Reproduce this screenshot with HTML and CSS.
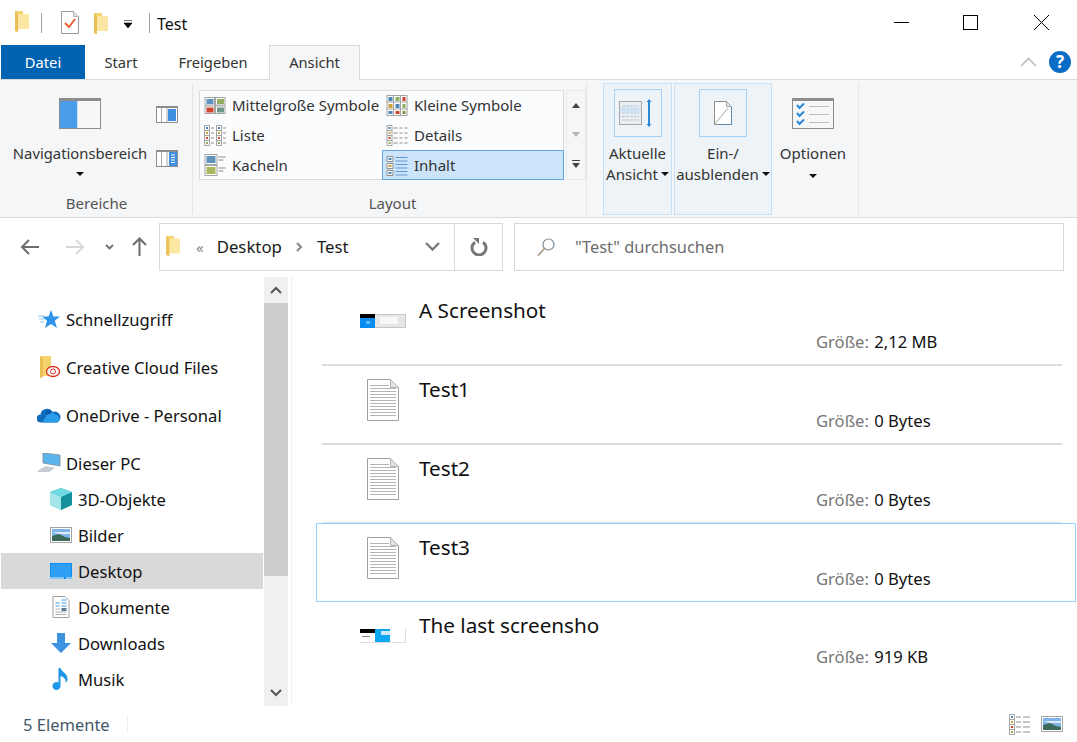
FILE: index.html
```html
<!doctype html>
<html>
<head>
    <title>Test</title>
    <meta charset="utf-8"/>
    <link rel="stylesheet" href="styles.css">
</head>
<body>
<svg class="defs" width="0" height="0">
    <defs>
        <symbol id="folder" viewBox="0 0 14 22">
            <path d="M0 1h8v3h6v15H3v3l-3-1z" fill="#f6d36f"/>
            <path d="M3 4h11v15H3z" fill="#fbe6a2"/>
            <path d="M0 1l3 3v18l-3-1z" fill="#e9bf56"/>
        </symbol>
        <symbol id="doc" viewBox="0 0 32 42">
            <path d="M.5.5h23l8 8v33H.5z" fill="#fff" stroke="#a0a0a0"/>
            <path d="M23.5.5v8h8z" fill="#e2e2e2" stroke="#b5b5b5"/>
            <path d="M3 6.500h19M3 9.500h26M3 12.500h26M3 15.500h26M3 18.500h26M3 21.500h26M3 24.500h26M3 27.500h26M3 30.500h26M3 33.500h26M3 36.500h26" stroke="#b4b4b4"/>
        </symbol>
        <symbol id="pic" viewBox="0 0 22 16">
            <rect x=".5" y=".5" width="21" height="15" fill="#fff" stroke="#a4a4a4"/>
            <rect x="2" y="2" width="18" height="12" fill="#7fb4ea"/>
            <path d="M2 9l7-2 6 3 5 1v3H2z" fill="#3e6a5c"/>
            <path d="M2 5h18v2H9z" fill="#dcebf7"/>
        </symbol>
    </defs>
</svg>

<header class="titlebar">
    <div class="qat">
        <svg class="qat-folder" width="14" height="22"><use href="#folder"/></svg>
        <span class="qat-sep"></span>
        <svg class="qat-check" width="18" height="23" viewBox="0 0 18 23">
            <path d="M.5.500h12l5 5v17H.5z" fill="#fff" stroke="#9a9a9a"/>
            <path d="M12.500.500v5h5" fill="#e6e6e6" stroke="#b5b5b5"/>
            <path d="M4 12l4 4 6-8" fill="none" stroke="#e8622c" stroke-width="2"/>
        </svg>
        <svg class="qat-folder2" width="14" height="22"><use href="#folder"/></svg>
        <svg class="qat-drop" width="10" height="9" viewBox="0 0 10 9"><path d="M1 .5h8M1 3h8L5 8z" fill="#000" stroke="#000" stroke-width=".6"/></svg>
        <span class="qat-sep second"></span>
        <span class="win-title">Test</span>
    </div>
    <div class="winctl">
        <svg width="15" height="15" viewBox="0 0 15 15"><path d="M0 7.500h15" stroke="#000"/></svg>
        <svg width="15" height="15" viewBox="0 0 15 15"><rect x=".5" y=".5" width="14" height="14" fill="none" stroke="#000"/></svg>
        <svg class="win-close" width="15" height="15" viewBox="0 0 15 15"><path d="M0 0l15 15M15 0L0 15" stroke="#000"/></svg>
    </div>
</header>

<nav class="tabs">
    <a class="tab file">Datei</a>
    <a class="tab start">Start</a>
    <a class="tab share">Freigeben</a>
    <a class="tab active">Ansicht</a>
    <span class="tabs-fill"></span>
    <svg class="collapse" width="17" height="10" viewBox="0 0 17 10"><path d="M1 9l7.500-7.500L16 9" fill="none" stroke="#bcbcbc" stroke-width="1.600"/></svg>
    <span class="help">?</span>
</nav>

<section class="ribbon">
    <div class="group panes">
        <div class="group-body">
            <div class="pane-big">
                <svg width="42" height="31" viewBox="0 0 42 31">
                    <rect x=".5" y=".5" width="41" height="30" fill="#f7f7f7" stroke="#8d8d8d"/>
                    <rect x="0" y="0" width="42" height="3" fill="#8d8d8d"/>
                    <rect x="1" y="3" width="17" height="27" fill="#4a9de6"/>
                    <path d="M18.500 3v27" stroke="#cfe3f5"/>
                </svg>
                <span class="big-label">Navigationsbereich</span>
                <span class="caret"></span>
            </div>
            <div class="pane-side">
                <svg width="22" height="17" viewBox="0 0 22 17">
                    <rect x=".5" y=".5" width="21" height="16" fill="#fff" stroke="#8d8d8d"/>
                    <rect y="0" width="22" height="2" fill="#8d8d8d"/>
                    <rect x="12" y="3" width="8" height="12" fill="#3e8fe0"/>
                    <path d="M5.500 2v14M11 2v14" stroke="#a9a9a9"/>
                </svg>
                <svg width="22" height="17" viewBox="0 0 22 17">
                    <rect x=".5" y=".5" width="21" height="16" fill="#fff" stroke="#8d8d8d"/>
                    <rect y="0" width="22" height="2" fill="#8d8d8d"/>
                    <rect x="13" y="2" width="8" height="14" fill="#3e8fe0"/>
                    <path d="M5.500 2v14M11 2v14" stroke="#a9a9a9"/>
                    <path d="M15 5h4M15 7.500h4M15 10h4M15 12.500h4" stroke="#fff"/>
                </svg>
            </div>
        </div>
        <div class="group-label">Bereiche</div>
    </div>

    <div class="group layout">
        <div class="group-body">
            <div class="gallery">
                <div class="gal-item">
                    <svg width="21" height="17" viewBox="0 0 21 17">
                        <rect x=".5" y=".5" width="9.500" height="7.500" fill="#fff" stroke="#a4a4a4"/>
                        <rect x="11" y=".5" width="9.500" height="7.500" fill="#fff" stroke="#a4a4a4"/>
                        <rect x=".5" y="9" width="9.500" height="7.500" fill="#fff" stroke="#a4a4a4"/>
                        <rect x="11" y="9" width="9.500" height="7.500" fill="#fff" stroke="#a4a4a4"/>
                        <rect x="2" y="2" width="7" height="5" fill="#5f93bd"/>
                        <rect x="12.500" y="2" width="7" height="5" fill="#8cae5e"/>
                        <rect x="2" y="10.500" width="7" height="5" fill="#d2452c"/>
                        <rect x="12.500" y="10.500" width="7" height="5" fill="#6f9a8a"/>
                    </svg>
                    <span>Mittelgroße Symbole</span>
                </div>
                <div class="gal-item">
                    <svg width="21" height="21" viewBox="0 0 21 21">
                        <rect x=".5" y=".5" width="20" height="20" fill="#fff" stroke="#a4a4a4"/>
                        <path d="M7 0v21M14 0v21M0 7h21M0 14h21" stroke="#a4a4a4"/>
                        <rect x="2" y="2" width="4" height="4" fill="#4d89b8"/><rect x="9" y="2" width="4" height="4" fill="#8cae5e"/><rect x="16" y="2" width="3" height="4" fill="#d2452c"/>
                        <rect x="2" y="9" width="4" height="4" fill="#c9a336"/><rect x="9" y="9" width="4" height="4" fill="#4d89b8"/><rect x="16" y="9" width="3" height="4" fill="#8cae5e"/>
                        <rect x="2" y="16" width="4" height="3" fill="#4d89b8"/><rect x="9" y="16" width="4" height="3" fill="#d2452c"/><rect x="16" y="16" width="3" height="3" fill="#7b8f45"/>
                    </svg>
                    <span>Kleine Symbole</span>
                </div>
                <div class="gal-item">
                    <svg width="22" height="21" viewBox="0 0 22 21">
                        <path d="M.5.500h5v20h-5zM.5 5.500h5M.5 10.500h5M.5 15.500h5M12.500.500h5v20h-5zM12.500 5.500h5M12.500 10.500h5M12.500 15.500h5" fill="#fff" stroke="#a4a4a4"/>
                        <path d="M7 3h3M7 8h3M7 13h3M7 18h3M19 3h3M19 8h3M19 13h3M19 18h3" stroke="#8d8d8d"/>
                        <rect x="2" y="2" width="2" height="2" fill="#4d89b8"/><rect x="2" y="7" width="2" height="2" fill="#c9a336"/><rect x="2" y="12" width="2" height="2" fill="#d2452c"/><rect x="2" y="17" width="2" height="2" fill="#8cae5e"/>
                        <rect x="14" y="2" width="2" height="2" fill="#4d89b8"/><rect x="14" y="7" width="2" height="2" fill="#c9a336"/><rect x="14" y="12" width="2" height="2" fill="#d2452c"/><rect x="14" y="17" width="2" height="2" fill="#8cae5e"/>
                    </svg>
                    <span>Liste</span>
                </div>
                <div class="gal-item">
                    <svg width="21" height="21" viewBox="0 0 21 21">
                        <path d="M.5.500h5v20h-5zM.5 5.500h5M.5 10.500h5M.5 15.500h5" fill="#fff" stroke="#a4a4a4"/>
                        <path d="M7 3h4M13 3h3M18 3h3M7 8h4M13 8h3M18 8h3M7 13h4M13 13h3M18 13h3M7 18h4M13 18h3M18 18h3" stroke="#8d8d8d"/>
                        <rect x="2" y="2" width="2" height="2" fill="#4d89b8"/><rect x="2" y="7" width="2" height="2" fill="#c9a336"/><rect x="2" y="12" width="2" height="2" fill="#d2452c"/><rect x="2" y="17" width="2" height="2" fill="#8cae5e"/>
                    </svg>
                    <span>Details</span>
                </div>
                <div class="gal-item">
                    <svg width="21" height="22" viewBox="0 0 21 22">
                        <rect x=".5" y=".5" width="12" height="10" fill="#fff" stroke="#a4a4a4"/>
                        <rect x=".5" y="11.500" width="12" height="10" fill="#fff" stroke="#a4a4a4"/>
                        <rect x="2" y="2" width="9" height="7" fill="#5f93bd"/>
                        <rect x="2" y="13" width="9" height="7" fill="#a9b85c"/>
                        <path d="M14 3h7M14 6h5M14 14h7M14 17h5" stroke="#8d8d8d"/>
                    </svg>
                    <span>Kacheln</span>
                </div>
                <div class="gal-item selected">
                    <svg width="21" height="21" viewBox="0 0 21 21">
                        <path d="M.5 1.500h6v5h-6zM.5 8.500h6v5h-6zM.5 15.500h6v5h-6z" fill="#fff" stroke="#8d8d8d"/>
                        <rect x="2" y="3" width="3" height="2" fill="#4d89b8"/><rect x="2" y="10" width="3" height="2" fill="#c9a336"/><rect x="2" y="17" width="3" height="2" fill="#4d89b8"/>
                        <path d="M9 2.500h12M9 6h12M9 9.500h12M9 13h12M9 16.500h12M9 20h12" stroke="#5c9bd8"/>
                    </svg>
                    <span>Inhalt</span>
                </div>
            </div>
            <div class="gal-scroll">
                <span class="gal-btn"><i class="tri up"></i></span>
                <span class="gal-btn"><i class="tri down off"></i></span>
                <span class="gal-btn more"><i class="bar"></i><i class="tri down"></i></span>
            </div>
        </div>
        <div class="group-label">Layout</div>
    </div>

    <div class="group views">
        <div class="view-btn hot view-current">
            <span class="view-icon">
                <svg width="38" height="28" viewBox="0 0 38 28">
                    <rect x=".5" y="2.500" width="22" height="23" fill="#e9eef2" stroke="#a8a8a8"/>
                    <path d="M3 7h17M3 10.500h17M3 14h17M3 17.500h17M3 21h17" stroke="#b9c6d0" stroke-dasharray="3 1"/>
                    <rect x="1" y="8" width="21" height="6" fill="#c9e1f5" opacity=".7"/>
                    <path d="M30 2v24" stroke="#2b88d8" stroke-width="2"/>
                    <path d="M27.500 3h5L30 0zM27.500 25h5L30 28z" fill="#2b88d8"/>
                </svg>
            </span>
            <span class="view-text">Aktuelle<br>Ansicht<i class="caret inline"></i></span>
        </div>
        <div class="view-btn hot view-toggle">
            <span class="view-icon">
                <svg width="18" height="24" viewBox="0 0 18 24">
                    <path d="M.5.500h12l5 5v18H.5z" fill="#fff" stroke="none"/>
                    <path d="M17.500 6v17.500H.5V.5h12" fill="none" stroke="#8d8d8d"/>
                    <path d="M17.500 6v17.500H5" fill="none" stroke="#2b88d8" stroke-dasharray="2 2"/>
                    <path d="M12.500.500v5h5z" fill="#e2e2e2" stroke="#a8a8a8"/>
                    <path d="M1 23L14 7" stroke="#a8a8a8"/>
                </svg>
            </span>
            <span class="view-text">Ein-/<br>ausblenden<i class="caret inline"></i></span>
        </div>
        <div class="view-btn view-options">
            <span class="view-icon plain">
                <svg width="42" height="31" viewBox="0 0 42 31">
                    <rect x=".5" y=".5" width="41" height="30" fill="#f7f7f7" stroke="#8d8d8d"/>
                    <rect width="42" height="3" fill="#8d8d8d"/>
                    <path d="M5 7l2.500 3L12 5.500M5 15l2.500 3L12 13.500M5 23l2.500 3L12 21.500" fill="none" stroke="#2b88d8" stroke-width="2"/>
                    <path d="M17 8.500h20M17 16.500h20M17 24.500h20" stroke="#bcbcbc"/>
                </svg>
            </span>
            <span class="view-text">Optionen<br><i class="caret solo"></i></span>
        </div>
    </div>
</section>

<section class="navbar">
    <svg class="nav-back" width="19" height="16" viewBox="0 0 19 16"><path d="M19 8H2M9 1L2 8l7 7" fill="none" stroke="#6d6d6d" stroke-width="2"/></svg>
    <svg class="nav-fwd" width="19" height="16" viewBox="0 0 19 16"><path d="M0 8h17M10 1l7 7-7 7" fill="none" stroke="#d9d9d9" stroke-width="2"/></svg>
    <svg class="nav-drop" width="9" height="6" viewBox="0 0 9 6"><path d="M1 1l3.500 3.500L8 1" fill="none" stroke="#6d6d6d" stroke-width="1.800"/></svg>
    <svg class="nav-up" width="15" height="19" viewBox="0 0 15 19"><path d="M7.500 19V2M1 8l6.500-6.500L14 8" fill="none" stroke="#6d6d6d" stroke-width="2"/></svg>
    <div class="address">
        <svg class="addr-folder" width="14" height="21"><use href="#folder"/></svg>
        <span class="crumb-more">«</span>
        <span class="crumb">Desktop</span>
        <svg class="crumb-sep" width="7" height="10" viewBox="0 0 7 10"><path d="M1 1l4 4-4 4" fill="none" stroke="#8a8a8a" stroke-width="2.200"/></svg>
        <span class="crumb">Test</span>
        <span class="addr-fill"></span>
        <svg class="addr-drop" width="15" height="9" viewBox="0 0 15 9"><path d="M1 1l6.500 6.500L14 1" fill="none" stroke="#7a7a7a" stroke-width="2.400"/></svg>
        <span class="refresh">
            <svg width="18" height="18" viewBox="0 0 18 18"><path d="M5 4.200A7 7 0 1 0 13 4.200" fill="none" stroke="#777" stroke-width="3"/><path d="M3 0h6v6z" fill="#777"/></svg>
        </span>
    </div>
    <div class="search">
        <svg width="20" height="20" viewBox="0 0 20 20"><circle cx="12.500" cy="7.500" r="5.500" fill="none" stroke="#7d8a96" stroke-width="1.200"/><path d="M8.500 11.500L2 18.500" stroke="#a08a70" stroke-width="1.400"/></svg>
        <span>"Test" durchsuchen</span>
    </div>
</section>

<main class="main">
    <aside class="tree">
        <ul class="tree-list">
            <li class="node top">
                <svg width="22" height="20" viewBox="0 0 22 20"><path d="M13 1l2.500 6.500H22l-5.200 4.200L19 19l-6-4-6 4 2-7.300L4 7.500h6.500z" fill="#2f93e8"/><path d="M0 7h6M1 10h5M2 13h4" stroke="#8cc4f2"/></svg>
                <span>Schnellzugriff</span>
            </li>
            <li class="node top">
                <svg width="22" height="22" viewBox="0 0 22 22"><path d="M2 0h11v20H5l-3 1z" fill="#f6d36f"/><path d="M2 0l3 3v18l-3 1z" fill="#e9bf56"/><ellipse cx="15" cy="15.500" rx="6.500" ry="5" fill="#fff" stroke="#e0301e" stroke-width="1.300"/><circle cx="15" cy="15.500" r="2.500" fill="none" stroke="#e0301e"/></svg>
                <span>Creative Cloud Files</span>
            </li>
            <li class="node top">
                <svg class="wide" width="24" height="16" viewBox="0 0 24 16"><path d="M4 15.500a4 4 0 0 1-.5-8A6.500 6.500 0 0 1 15.500 5 5 5 0 0 1 20 15.500z" fill="#0f6cbd"/><path d="M9 9.500a5 5 0 0 1 9-2 4.200 4.200 0 0 1 2 8H5z" fill="#2a9cea"/><path d="M9 4a6 6 0 0 1 6.500 1L11 8l-3-1z" fill="#0a5aa8"/></svg>
                <span>OneDrive - Personal</span>
            </li>
            <li class="node top">
                <svg class="wide" width="24" height="20" viewBox="0 0 24 20"><path d="M6 0l17 2v11L6 10z" fill="#5db5ee" stroke="#7b8a96" stroke-width=".8"/><path d="M0 18l9-5 9 2-6 4H2z" fill="#c6ccd1"/></svg>
                <span>Dieser PC</span>
            </li>
            <li class="node sub">
                <svg width="22" height="22" viewBox="0 0 22 22"><path d="M11 0l11 4v13l-11 5-11-5V4z" fill="#4ec4cf"/><path d="M0 4l11 5v13L0 17z" fill="#a5e6ea"/><path d="M22 4L11 9v13l11-5z" fill="#16909c"/><path d="M0 4l11-4 11 4-11 5z" fill="#6fd8e0"/></svg>
                <span>3D-Objekte</span>
            </li>
            <li class="node sub">
                <svg width="22" height="16"><use href="#pic"/></svg>
                <span>Bilder</span>
            </li>
            <li class="node sub node-current">
                <svg width="22" height="16" viewBox="0 0 22 16"><rect width="22" height="16" fill="#0d8ef2"/><path d="M1 1h20v13H1z" fill="#2e9ff5"/><path d="M0 15h22" stroke="#fff" stroke-dasharray="14 2"/></svg>
                <span>Desktop</span>
            </li>
            <li class="node sub">
                <svg width="17" height="22" viewBox="0 0 17 22"><path d="M.5.500h12l4 4v17H.5z" fill="#fff" stroke="#a0a0a0"/><path d="M3 7h4M3 10h4M9 4h5M9 7h5M9 10h5" stroke="#3d9be6"/><rect x="9" y="12" width="5" height="3" fill="#5d7d8f"/><path d="M3 13h5M3 16h11M3 18.500h11" stroke="#b0b0b0"/></svg>
                <span>Dokumente</span>
            </li>
            <li class="node sub">
                <svg width="20" height="20" viewBox="0 0 20 20"><path d="M6 0h8v10h6L10 20 0 10h6z" fill="#3d93e2"/></svg>
                <span>Downloads</span>
            </li>
            <li class="node sub">
                <svg width="17" height="22" viewBox="0 0 17 22"><path d="M6 0h2c1 4 7 5 7 11 0 2-1 3-2 4 1-4-2-6-5-7v10a4 4 0 1 1-2-3.500z" fill="#1e97e8"/></svg>
                <span>Musik</span>
            </li>
            <li class="node sub">
                <svg width="22" height="16" viewBox="0 0 22 16"><rect x=".5" y=".5" width="21" height="15" fill="#3f6fb5" stroke="#8d8d8d"/></svg>
                <span></span>
            </li>
        </ul>
    </aside>
    <div class="vscroll">
        <span class="vs-btn"><svg width="12" height="8" viewBox="0 0 12 8"><path d="M1 7l5-5 5 5" fill="none" stroke="#555" stroke-width="2"/></svg></span>
        <span class="vs-thumb"></span>
        <span class="vs-track"></span>
        <span class="vs-btn"><svg width="12" height="8" viewBox="0 0 12 8"><path d="M1 1l5 5 5-5" fill="none" stroke="#555" stroke-width="2"/></svg></span>
    </div>
    <div class="files">
        <article class="file-row">
            <div class="file-icon">
                <svg width="46" height="14" viewBox="0 0 46 14"><rect width="46" height="14" fill="#c8c8c8"/><rect width="15" height="14" fill="#0a8df0"/><rect width="15" height="4" fill="#000"/><rect x="15" y="1" width="30" height="12" fill="#e6e6e6"/><rect x="20" y="3" width="18" height="7" fill="#f8f8f8"/><rect x="6" y="7" width="4" height="3" fill="#5fc0ff"/></svg>
            </div>
            <div class="file-name">A Screenshot</div>
            <div class="file-size"><span>Größe:</span> 2,12 MB</div>
        </article>
        <article class="file-row">
            <div class="file-icon"><svg width="32" height="42"><use href="#doc"/></svg></div>
            <div class="file-name">Test1</div>
            <div class="file-size"><span>Größe:</span> 0 Bytes</div>
        </article>
        <article class="file-row">
            <div class="file-icon"><svg width="32" height="42"><use href="#doc"/></svg></div>
            <div class="file-name">Test2</div>
            <div class="file-size"><span>Größe:</span> 0 Bytes</div>
        </article>
        <article class="file-row focused">
            <div class="file-icon"><svg width="32" height="42"><use href="#doc"/></svg></div>
            <div class="file-name">Test3</div>
            <div class="file-size"><span>Größe:</span> 0 Bytes</div>
        </article>
        <article class="file-row last">
            <div class="file-icon">
                <svg width="46" height="14" viewBox="0 0 46 14"><rect width="46" height="14" fill="#ddd"/><rect width="15" height="13" fill="#fff"/><rect width="15" height="4" fill="#000"/><rect x="2" y="7" width="8" height="1" fill="#888"/><rect x="15" width="15" height="13" fill="#0aa8f0"/><rect x="30" y="0" width="15" height="13" fill="#fff"/><rect x="21" y="2" width="9" height="4" fill="#cfe8f6"/></svg>
            </div>
            <div class="file-name">The last screensho</div>
            <div class="file-size"><span>Größe:</span> 919 KB</div>
        </article>
    </div>
</main>

<footer class="statusbar">
    <span class="count">5 Elemente</span>
    <span class="status-sep"></span>
    <span class="addr-fill"></span>
    <svg width="22" height="21" viewBox="0 0 22 21">
        <path d="M.5.500h5v20h-5zM.5 5.500h5M.5 10.500h5M.5 15.500h5" fill="#fff" stroke="#a4a4a4"/>
        <path d="M7 3h5M14 3h7M7 8h5M14 8h7M7 13h5M14 13h7M7 18h5M14 18h7" stroke="#8d8d8d"/>
        <rect x="2" y="2" width="2" height="2" fill="#4d89b8"/><rect x="2" y="7" width="2" height="2" fill="#c9a336"/><rect x="2" y="12" width="2" height="2" fill="#d2452c"/><rect x="2" y="17" width="2" height="2" fill="#8cae5e"/>
    </svg>
    <svg class="status-pic" width="22" height="16"><use href="#pic"/></svg>
</footer>
</body>
</html>
```

FILE: styles.css
```css
* {
box-sizing: border-box;
}
html, body {
margin: 0;
padding: 0;
height: 742px;
overflow: hidden;
}
body {
width: 1077px;
background-color: #fff;
color: #1a1a1a;
font-family: "Noto Sans", "Open Sans", sans-serif;
font-size: 15px;
display: flex;
flex-direction: column;
}
svg {
display: block;
flex: none;
}
.defs {
position: absolute;
}

/* title bar */
.titlebar {
height: 45px;
display: flex;
justify-content: space-between;
}
.qat {
display: flex;
align-items: center;
padding-left: 15px;
}
.qat-folder {
margin-top: -4px;
}
.qat-sep {
width: 1px;
height: 20px;
background: #a0a0a0;
margin: 0 19px 0 12px;
}
.qat-sep.second {
margin: 0 7px 0 16px;
}
.qat-folder2 {
margin-left: 15px;
}
.qat-drop {
margin-left: 15px;
margin-top: 4px;
}
.win-title {
font-size: 16px;
color: #111;
margin-top: 2px;
}
.winctl {
display: flex;
align-items: center;
gap: 54px;
padding: 0 28px 0 0;
margin-top: -1px;
}
.win-close {
margin-left: 2px;
}

/* tabs */
.tabs {
height: 35px;
display: flex;
align-items: stretch;
border-bottom: 1px solid #dadbdc;
padding-left: 1px;
font-size: 14.7px;
color: #333;
}
.tab {
display: flex;
align-items: center;
justify-content: center;
height: 34px;
}
.tab.file {
width: 84px;
background: #0063b1;
color: #fff;
}
.tab.start {
width: 72px;
}
.tab.share {
width: 112px;
}
.tab.active {
width: 91px;
height: 35px;
background: #f5f6f7;
border: 1px solid #dadbdc;
border-bottom: none;
padding-bottom: 2px;
}
.tabs-fill, .addr-fill {
flex: 1;
}
.collapse {
align-self: center;
margin: 0 12px 0 0;
}
.help {
width: 22px;
height: 22px;
border-radius: 50%;
background: #0a6cc4;
color: #fff;
font-weight: 700;
font-size: 17px;
line-height: 22px;
text-align: center;
align-self: center;
margin-right: 6px;
}

/* ribbon */
.ribbon {
height: 138px;
background: #f5f6f7;
border-bottom: 1px solid #dadbdc;
display: flex;
font-size: 15px;
color: #333;
padding-left: 1px;
}
.group {
display: flex;
flex-direction: column;
border-right: 1px solid #e4e5e6;
margin: 3px 0 3px;
}
.group-body {
flex: 1;
display: flex;
}
.group-label {
height: 22px;
line-height: 22px;
text-align: center;
color: #555;
}
.panes {
width: 192px;
}
.pane-big {
width: 148px;
margin-left: 5px;
display: flex;
flex-direction: column;
align-items: center;
padding-top: 15px;
}
.big-label {
margin-top: 14px;
line-height: 20px;
white-space: nowrap;
font-size: 14.8px;
}
.caret {
display: block;
width: 0;
height: 0;
border-left: 4px solid transparent;
border-right: 4px solid transparent;
border-top: 4px solid #111;
margin-top: 9px;
}
.caret.inline {
display: inline-block;
margin: 0 0 3px 3px;
vertical-align: middle;
}
.caret.solo {
display: inline-block;
margin: 0;
vertical-align: middle;
}
.pane-side {
display: flex;
flex-direction: column;
gap: 27px;
padding: 23px 0 0 2px;
}
.layout {
width: 394px;
padding-left: 6px;
}
.gallery {
width: 365px;
height: 90px;
margin-top: 7px;
background: #fbfcfe;
border: 1px solid #dadbdc;
display: grid;
grid-template-columns: 182px 182px;
grid-template-rows: 28px 28px 28px;
row-gap: 2px;
}
.gal-item {
display: flex;
align-items: center;
gap: 6px;
padding-left: 4px;
white-space: nowrap;
}
.gal-item svg {
width: 22px;
}
.gal-item.selected {
background: #cce4f9;
border: 1px solid #62a6e6;
padding-left: 3px;
margin-top: -1px;
height: 30px;
}
.gal-scroll {
width: 21px;
height: 90px;
margin: 7px 0 0 2px;
border: 1px solid #e6e7e8;
border-left-color: #eceded;
display: flex;
flex-direction: column;
}
.gal-btn {
flex: 1;
display: flex;
flex-direction: column;
gap: 2px;
align-items: center;
justify-content: center;
}
.tri {
width: 0;
height: 0;
border-left: 4px solid transparent;
border-right: 4px solid transparent;
}
.tri.up {
border-bottom: 5px solid #444;
}
.tri.down {
border-top: 5px solid #444;
}
.tri.off {
border-top-color: #b5b5b5;
}
.bar {
width: 8px;
height: 1px;
background: #444;
}
.views {
border-right: 1px solid #e4e5e6;
margin-left: 16px;
width: 256px;
flex-direction: row;
margin-top: 3px;
margin-bottom: 2px;
gap: 2px;
}
.view-btn {
display: flex;
flex-direction: column;
align-items: center;
line-height: 21px;
text-align: center;
}
.view-btn.hot {
background: #eef3f8;
border: 1px solid #c6e0f5;
padding-top: 5px;
}
.view-current {
width: 69px;
}
.view-toggle {
width: 98px;
}
.view-options {
width: 86px;
padding: 6px 4px 0 0;
margin-left: -2px;
}
.view-icon {
width: 48px;
height: 48px;
display: flex;
align-items: center;
justify-content: center;
border: 1px solid #a8d2f5;
flex: none;
}
.view-icon.plain {
border: none;
}
.view-text {
margin-top: 6px;
white-space: nowrap;
}

/* address bar */
.navbar {
height: 59px;
display: flex;
align-items: center;
padding: 0 13px 0 20px;
margin-top: -1px;
}
.nav-fwd {
margin-left: 27px;
}
.nav-drop {
margin-left: 20px;
}
.nav-up {
margin-left: 18px;
}
.address {
width: 344px;
height: 48px;
margin-left: 12px;
border: 1px solid #d9d9d9;
display: flex;
align-items: center;
padding-left: 6px;
font-size: 16.8px;
color: #1a1a1a;
}
.crumb-more {
margin-left: 16px;
color: #888;
font-size: 15px;
}
.addr-folder {
margin-top: -2px;
}
.crumb {
margin-left: 13px;
}
.crumb-sep {
margin-left: 14px;
margin-right: 1px;
}
.addr-drop {
margin-right: 14px;
}
.refresh {
width: 48px;
height: 46px;
border-left: 1px solid #d9d9d9;
display: flex;
align-items: center;
justify-content: center;
}
.search {
flex: 1;
height: 48px;
margin-left: 11px;
border: 1px solid #d9d9d9;
display: flex;
align-items: center;
gap: 19px;
padding-left: 21px;
font-size: 16.4px;
color: #6d6d6d;
}

/* main area */
.main {
height: 429px;
margin-top: 1px;
display: flex;
}
.tree {
width: 264px;
overflow: hidden;
padding-left: 1px;
}
.tree-list {
list-style: none;
margin: 0;
padding: 23px 0 0 0;
}
.node {
height: 36px;
display: flex;
align-items: center;
font-size: 16.6px;
color: #111;
}
.node svg {
margin-right: 6px;
}
.node svg.wide {
margin: 0 5px 0 -1px;
}
.node.top {
height: 48px;
padding-left: 37px;
}
.node.top:first-child {
margin-top: -5px;
}
.node.top:nth-child(4) {
height: 36px;
margin-top: 6px;
}
.node.sub {
padding-left: 49px;
}
.node.sub svg {
width: 22px;
margin-right: 6px;
}
.node-current {
background: #d9d9d9;
margin-right: 1px;
}
.vscroll {
width: 24px;
background: #f0f0f0;
display: flex;
flex-direction: column;
}
.vs-btn {
height: 26px;
flex: none;
display: flex;
align-items: center;
justify-content: center;
}
.vs-thumb {
height: 273px;
background: #cdcdcd;
}
.vs-track {
flex: 1;
}
.files {
flex: 1;
border-left: 1px solid #f0f0f0;
margin-left: 3px;
padding-top: 10px;
padding-left: 30px;
}
.file-row {
width: 740px;
height: 79px;
border-bottom: 2px solid #dcdcdc;
display: grid;
grid-template-columns: 97px 397px 1fr;
grid-template-rows: 46px 18px;
}
.file-icon {
grid-row: 1 / 3;
display: flex;
align-items: center;
justify-content: center;
padding: 4px 13px 0 38px;
}
.file-name {
grid-column: 2 / 4;
font-size: 20.7px;
line-height: 46px;
color: #111;
white-space: nowrap;
}
.file-size {
grid-column: 3;
font-size: 16.6px;
line-height: 18px;
color: #111;
}
.file-size span {
color: #777;
margin-right: 1px;
}
.file-row.focused {
width: 760px;
height: 79px;
margin: -1px 0 0 -6px;
padding-left: 5px;
border: 1px solid #99d1ff;
}
.file-row.last {
border-bottom: none;
}

/* status bar */
.statusbar {
flex: 1;
display: flex;
align-items: center;
padding: 0 14px 0 23px;
font-size: 16.5px;
color: #44586b;
}
.status-sep {
width: 1px;
height: 18px;
background: #eee;
margin-left: 17px;
}
.status-pic {
margin-left: 10px;
}
```
